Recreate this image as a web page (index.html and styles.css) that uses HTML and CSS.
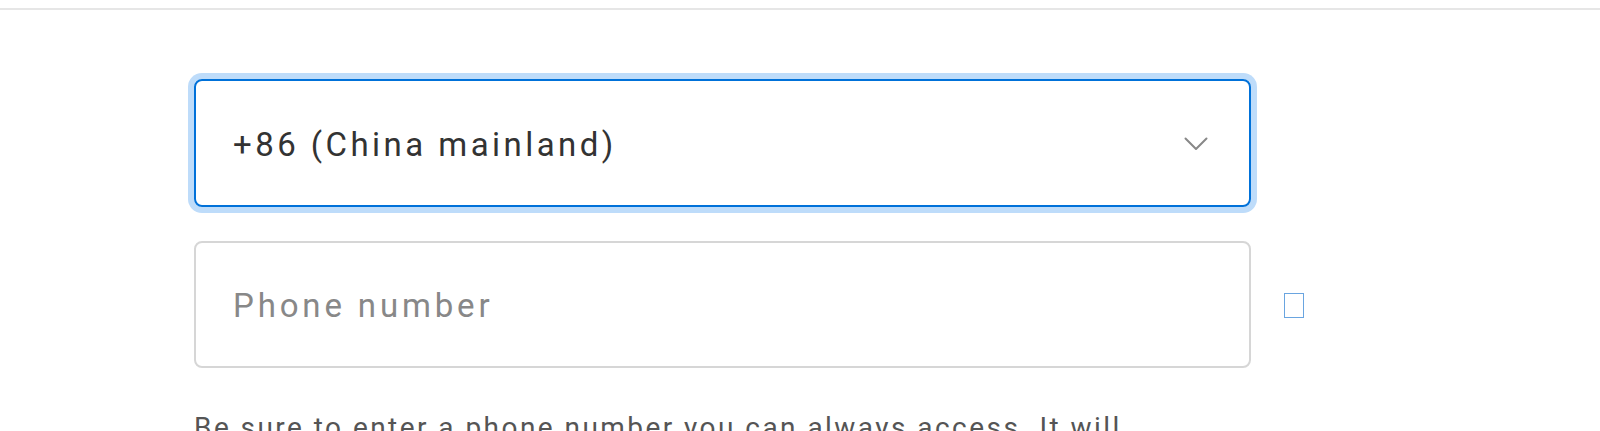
FILE: index.html
```html
<!DOCTYPE html>
<html lang="en">
<head>
<meta charset="utf-8">
<title>Phone number</title>
<link rel="stylesheet" href="styles.css">
</head>
<body>
<div class="topline"></div>
<main class="form">
  <div class="field field-select">
    <span class="value">+86 (China mainland)</span>
    <svg class="chevron" width="24" height="14" viewBox="0 0 24 14" aria-hidden="true">
      <path d="M1.5 1.5 L12 12 L22.5 1.5" fill="none" stroke="#888" stroke-width="2" stroke-linecap="round" stroke-linejoin="round"/>
    </svg>
  </div>
  <div class="row">
    <div class="field field-input">
      <span class="placeholder">Phone number</span>
    </div>
    <span class="tofu" aria-hidden="true"></span>
  </div>
  <p class="help">Be sure to enter a phone number you can always access. It will be used to verify your identity any time you sign in.</p>
</main>
</body>
</html>
```
FILE: styles.css
```css
html, body {
  margin: 0;
  padding: 0;
  background: #fff;
}
body {
  font-family: Roboto, "Liberation Sans", Arial, sans-serif;
  overflow: hidden;
}
.topline {
  margin-top: 8px;
  height: 2px;
  background: #e6e6e6;
}
.form {
  padding: 69px 0 0 194px;
  display: flex;
  flex-direction: column;
}
.field {
  box-sizing: border-box;
  width: 1057px;
  display: flex;
  align-items: center;
  padding: 0 37px;
  border-radius: 8px;
  font-size: 33px;
}
.field-select {
  height: 128px;
  border: 2px solid #0071d9;
  box-shadow: 0 0 0 6px #bedcfa;
  justify-content: space-between;
  color: #333;
  letter-spacing: 3.45px;
}
.value {
  padding-top: 2px;
}
.chevron {
  margin-right: 4px;
  margin-top: 2px;
}
.row {
  margin-top: 34px;
  display: flex;
  align-items: center;
  gap: 33px;
}
.field-input {
  height: 127px;
  border: 2px solid #d6d6d6;
  color: #888;
  letter-spacing: 3.85px;
}
.placeholder {
  padding-top: 2px;
}
.tofu {
  box-sizing: border-box;
  width: 20px;
  height: 25px;
  border: 1.5px solid #6aa5e0;
  margin-top: 2px;
}
.help {
  margin: 40px 0 0;
  width: 940px;
  font-size: 28px;
  letter-spacing: 2.45px;
  line-height: 40px;
  color: #555;
}
```
